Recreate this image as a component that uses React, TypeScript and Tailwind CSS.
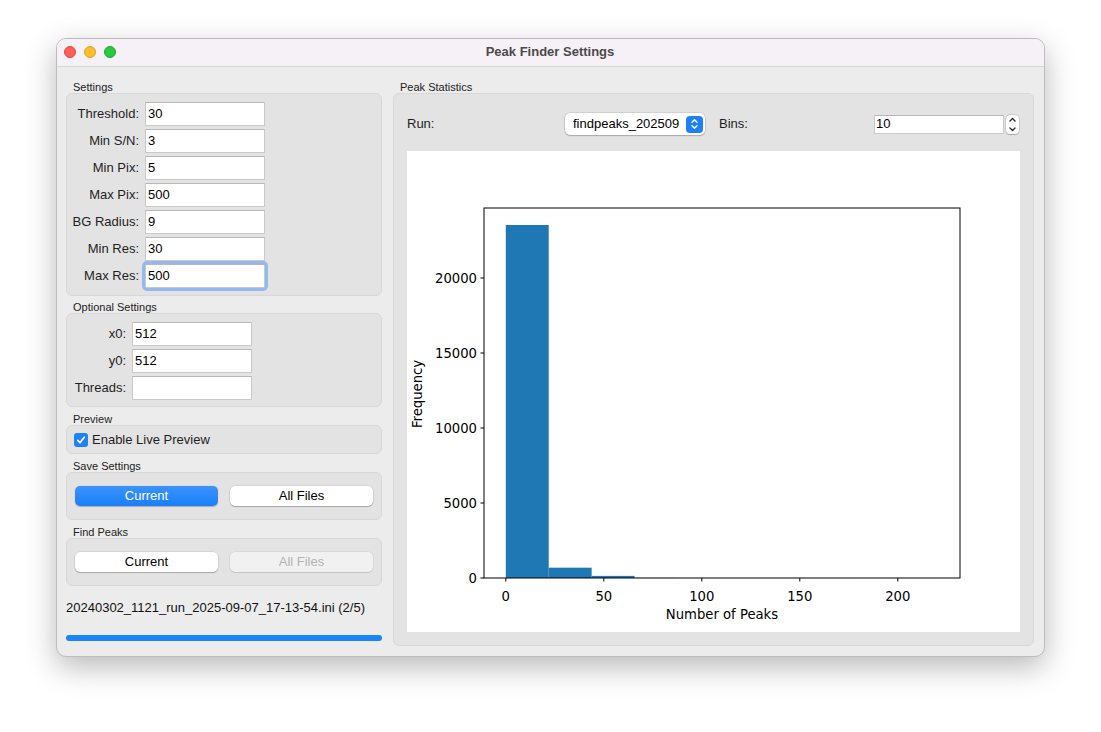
import React from "react";

const FONT = "font-['Liberation_Sans',Arial,sans-serif]";

function Field({ value, focused }: { value: string; focused?: boolean }) {
  return (
    <div
      className={`h-[24px] w-[120px] bg-white border border-[#c9c9c9] border-t-[#b8b8b8] pl-[2px] flex items-center text-[13px] text-black ${
        focused ? "rounded-[2px] border-[#7fa9e8] shadow-[0_0_0_3px_#93b9ef]" : ""
      }`}
    >
      {value}
    </div>
  );
}

function Row({ label, value, labelW, focused }: { label: string; value: string; labelW: string; focused?: boolean }) {
  return (
    <div className="flex items-center h-[24px]">
      <div className={`${labelW} text-right text-[13px] text-[#1e1e1e] whitespace-nowrap`}>{label}</div>
      <div className="ml-[6px]">
        <Field value={value} focused={focused} />
      </div>
    </div>
  );
}

function SectionLabel({ children, className = "" }: { children: React.ReactNode; className?: string }) {
  return <div className={`h-[12px] leading-[12px] text-[11px] text-[#222] pl-[7px] ${className}`}>{children}</div>;
}

function Group({ children, className = "" }: { children: React.ReactNode; className?: string }) {
  return (
    <div className={`bg-[#e3e3e3] border border-[#d8d8d8] rounded-[6px] ${className}`}>{children}</div>
  );
}

function Btn({ kind, children }: { kind: "blue" | "white" | "disabled"; children: React.ReactNode }) {
  const cls =
    kind === "blue"
      ? "bg-[linear-gradient(to_bottom,#3b93fd,#1a7ffb)] text-white shadow-[0_0.5px_1px_rgba(0,0,0,0.25)]"
      : kind === "white"
      ? "bg-white text-black shadow-[0_0_0_0.5px_rgba(0,0,0,0.12),0_1px_1px_rgba(0,0,0,0.22)]"
      : "bg-[#f1f1f1] text-[#b3b3b3] shadow-[0_0_0_0.5px_rgba(0,0,0,0.08),0_1px_1px_rgba(0,0,0,0.1)]";
  return (
    <div className={`w-[143px] h-[20px] rounded-[5px] flex items-center justify-center text-[13px] ${cls}`}>
      {children}
    </div>
  );
}

function UpDown({ color }: { color: string }) {
  return (
    <svg width="9" height="14" viewBox="0 0 9 14">
      <path d="M2 5.2 L4.5 2.7 L7 5.2" fill="none" stroke={color} strokeWidth="1.5" strokeLinecap="round" strokeLinejoin="round" />
      <path d="M2 8.8 L4.5 11.3 L7 8.8" fill="none" stroke={color} strokeWidth="1.5" strokeLinecap="round" strokeLinejoin="round" />
    </svg>
  );
}

function SpinArrows() {
  return (
    <svg width="9" height="17" viewBox="0 0 9 17">
      <path d="M2 5 L4.5 2.6 L7 5" fill="none" stroke="#2a2a2a" strokeWidth="1.4" strokeLinecap="round" strokeLinejoin="round" />
      <path d="M2 12 L4.5 14.4 L7 12" fill="none" stroke="#2a2a2a" strokeWidth="1.4" strokeLinecap="round" strokeLinejoin="round" />
    </svg>
  );
}

function Chart() {
  const W = 613;
  const H = 481;
  const ax = { l: 77, t: 57, r: 553, b: 427 };
  const x0 = 98.8;
  const pxPerUnit = 1.96;
  const yScale = 0.015;
  const binW = 21.9;
  const counts = [23533, 687, 140, 6, 2, 1, 1, 1, 0, 1];
  const xt = (v: number) => x0 + v * pxPerUnit;
  const yt = (c: number) => ax.b - c * yScale;
  const yTicks = [0, 5000, 10000, 15000, 20000];
  const xTicks = [0, 50, 100, 150, 200];
  const font = "DejaVu Sans, sans-serif";
  return (
    <svg width={W} height={H} viewBox={`0 0 ${W} ${H}`}>
      <rect x="0" y="0" width={W} height={H} fill="#ffffff" />
      {counts.map((c, i) => {
        const xa = xt(i * binW);
        const xb = xt((i + 1) * binW);
        const y = yt(c);
        return <rect key={i} x={xa} y={y} width={xb - xa} height={ax.b - y} fill="#1f77b4" />;
      })}
      <rect x={ax.l} y={ax.t} width={ax.r - ax.l} height={ax.b - ax.t} fill="none" stroke="#000" strokeWidth="1" />
      {yTicks.map((v) => (
        <g key={v}>
          <line x1={ax.l - 3.5} x2={ax.l} y1={yt(v)} y2={yt(v)} stroke="#000" strokeWidth="1" />
          <text x={ax.l - 7} y={yt(v) + 4.7} textAnchor="end" fontFamily={font} fontSize="13.2" fill="#000">
            {v}
          </text>
        </g>
      ))}
      {xTicks.map((v) => (
        <g key={v}>
          <line x1={xt(v)} x2={xt(v)} y1={ax.b} y2={ax.b + 3.5} stroke="#000" strokeWidth="1" />
          <text x={xt(v)} y={ax.b + 23} textAnchor="middle" fontFamily={font} fontSize="13.2" fill="#000">
            {v}
          </text>
        </g>
      ))}
      <text x={(ax.l + ax.r) / 2} y={468} textAnchor="middle" fontFamily={font} fontSize="13.2" fill="#000">
        Number of Peaks
      </text>
      <text
        x={0}
        y={0}
        transform={`translate(15 ${(ax.t + ax.b) / 2 + 1}) rotate(-90)`}
        textAnchor="middle"
        fontFamily={font}
        fontSize="13.2"
        fill="#000"
      >
        Frequency
      </text>
    </svg>
  );
}

export default function App() {
  return (
    <div className={`w-[1101px] h-[732px] bg-white pt-[38px] pl-[56px] ${FONT}`}>
      <div className="w-[989px] h-[619px] rounded-[10px] border border-[#bdbdbd] bg-[#ececec] overflow-hidden shadow-[0_10px_30px_rgba(0,0,0,0.28)] flex flex-col">
        {/* Title bar */}
        <div className="h-[28px] shrink-0 bg-[#f6f1f6] border-b border-[#d6d6d6] flex items-center pb-[1px]">
          <div className="flex items-center gap-[8px] pl-[7px]">
            <div className="w-[12px] h-[12px] rounded-full bg-[#ff5f57] border border-[#e2463f]" />
            <div className="w-[12px] h-[12px] rounded-full bg-[#febc2e] border border-[#dfa023]" />
            <div className="w-[12px] h-[12px] rounded-full bg-[#28c840] border border-[#1aab29]" />
          </div>
          <div className="flex-1 text-center text-[13px] font-bold text-[#4a4a4a] pr-[60px]">Peak Finder Settings</div>
        </div>

        {/* Body */}
        <div className="flex pl-[9px] pt-[14px] gap-[11px]">
          {/* Left column */}
          <div className="w-[316px] flex flex-col">
            <SectionLabel>Settings</SectionLabel>
            <Group className="h-[203px] pt-[8px] flex flex-col gap-[3px]">
              <Row label="Threshold:" value="30" labelW="w-[72px]" />
              <Row label="Min S/N:" value="3" labelW="w-[72px]" />
              <Row label="Min Pix:" value="5" labelW="w-[72px]" />
              <Row label="Max Pix:" value="500" labelW="w-[72px]" />
              <Row label="BG Radius:" value="9" labelW="w-[72px]" />
              <Row label="Min Res:" value="30" labelW="w-[72px]" />
              <Row label="Max Res:" value="500" labelW="w-[72px]" focused />
            </Group>

            <SectionLabel className="mt-[5px]">Optional Settings</SectionLabel>
            <Group className="h-[94px] pt-[8px] flex flex-col gap-[3px]">
              <Row label="x0:" value="512" labelW="w-[59px]" />
              <Row label="y0:" value="512" labelW="w-[59px]" />
              <Row label="Threads:" value="" labelW="w-[59px]" />
            </Group>

            <SectionLabel className="mt-[6px]">Preview</SectionLabel>
            <Group className="h-[29px] flex items-center pl-[7px] gap-[4px]">
              <div className="w-[14px] h-[14px] rounded-[3px] bg-[#1d82fb] flex items-center justify-center">
                <svg width="10" height="10" viewBox="0 0 10 10">
                  <path d="M1.8 5.3 L4 7.6 L8.3 2.2" fill="none" stroke="#fff" strokeWidth="1.7" strokeLinecap="round" strokeLinejoin="round" />
                </svg>
              </div>
              <span className="text-[13px] text-[#1e1e1e]">Enable Live Preview</span>
            </Group>

            <SectionLabel className="mt-[6px]">Save Settings</SectionLabel>
            <Group className="h-[48px] flex items-center pl-[8px] gap-[12px]">
              <Btn kind="blue">Current</Btn>
              <Btn kind="white">All Files</Btn>
            </Group>

            <SectionLabel className="mt-[6px]">Find Peaks</SectionLabel>
            <Group className="h-[48px] flex items-center pl-[8px] gap-[12px]">
              <Btn kind="white">Current</Btn>
              <Btn kind="disabled">All Files</Btn>
            </Group>

            <div className="mt-[14px] h-[16px] leading-[16px] text-[13px] text-[#111] whitespace-nowrap">
              20240302_1121_run_2025-09-07_17-13-54.ini (2/5)
            </div>

            <div className="mt-[19px] h-[6px] rounded-full bg-[#1a84fb]" />
          </div>

          {/* Right column */}
          <div className="w-[641px] flex flex-col">
            <SectionLabel className="pl-[6px]">Peak Statistics</SectionLabel>
            <Group className="h-[553px] flex flex-col px-[13px]">
              <div className="h-[22px] mt-[19px] flex items-center">
                <div className="w-[158px] text-[13px] text-[#1e1e1e]">Run:</div>
                <div className="w-[140px] h-[22px] bg-white rounded-[5px] shadow-[0_0_0_0.5px_rgba(0,0,0,0.15),0_1px_1.5px_rgba(0,0,0,0.2)] flex items-center pl-[8px] pr-[2px]">
                  <span className="flex-1 overflow-hidden whitespace-nowrap text-[13px] text-black">findpeaks_202509</span>
                  <div className="w-[17px] h-[17px] rounded-[4px] bg-[#1c80fb] flex items-center justify-center shrink-0">
                    <UpDown color="#ffffff" />
                  </div>
                </div>
                <div className="ml-[14px] w-[155px] text-[13px] text-[#1e1e1e]">Bins:</div>
                <div className="w-[130px] h-[19px] bg-white border border-[#c9c9c9] border-t-[#b8b8b8] flex items-center pl-[1px] text-[13px] text-black">
                  10
                </div>
                <div className="ml-[2px] w-[13px] h-[19px] bg-white rounded-[4px] shadow-[0_0_0_0.5px_rgba(0,0,0,0.18),0_0.5px_1px_rgba(0,0,0,0.2)] flex items-center justify-center">
                  <SpinArrows />
                </div>
              </div>
              <div className="mt-[16px] w-[613px] h-[481px] bg-white">
                <Chart />
              </div>
            </Group>
          </div>
        </div>
      </div>
    </div>
  );
}
